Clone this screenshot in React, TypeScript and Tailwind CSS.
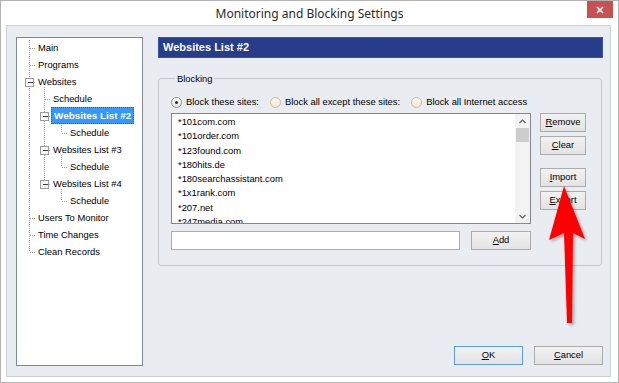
import React from 'react';

type TreeRow = { label: string; level: 0 | 1 | 2; box?: boolean; selected?: boolean };

const rows: TreeRow[] = [
  { label: 'Main', level: 0 },
  { label: 'Programs', level: 0 },
  { label: 'Websites', level: 0, box: true },
  { label: 'Schedule', level: 1 },
  { label: 'Websites List #2', level: 1, box: true, selected: true },
  { label: 'Schedule', level: 2 },
  { label: 'Websites List #3', level: 1, box: true },
  { label: 'Schedule', level: 2 },
  { label: 'Websites List #4', level: 1, box: true },
  { label: 'Schedule', level: 2 },
  { label: 'Users To Monitor', level: 0 },
  { label: 'Time Changes', level: 0 },
  { label: 'Clean Records', level: 0 },
];

const sites = [
  '*101com.com',
  '*101order.com',
  '*123found.com',
  '*180hits.de',
  '*180searchassistant.com',
  '*1x1rank.com',
  '*207.net',
  '*247media.com',
];

const indent = ['pl-[19px]', 'pl-[34px]', 'pl-[51px]'];
const lineX = [12, 27, 44];
const textX = [18, 33, 50];
const cy = (k: number) => 10 + 17 * k;

function TreeLines() {
  return (
    <svg className="absolute inset-0 pointer-events-none" width="125" height="326" shapeRendering="crispEdges">
      <g stroke="#a0a0a0" strokeDasharray="1 1">
        <line x1={12.5} y1={2} x2={12.5} y2={cy(12)} />
        <line x1={27.5} y1={cy(2) + 5} x2={27.5} y2={cy(8)} />
        {[4, 6, 8].map((k) => (
          <line key={k} x1={44.5} y1={cy(k) + 5} x2={44.5} y2={cy(k + 1)} />
        ))}
        {rows.map((r, k) => (
          <line
            key={k}
            x1={r.box ? lineX[r.level] + 5 : lineX[r.level] + 1}
            y1={cy(k) + 0.5}
            x2={textX[r.level]}
            y2={cy(k) + 0.5}
          />
        ))}
      </g>
      {rows.map((r, k) =>
        r.box ? (
          <g key={k}>
            <rect x={lineX[r.level] - 3.5} y={cy(k) - 3.5} width={8} height={8} fill="#f7f7f7" stroke="#9c9c9c" />
            <line x1={lineX[r.level] - 1} x2={lineX[r.level] + 4} y1={cy(k) + 0.5} y2={cy(k) + 0.5} stroke="#404040" />
          </g>
        ) : null
      )}
    </svg>
  );
}

function Radio({ checked, label, hot }: { checked?: boolean; label: string; hot?: boolean }) {
  return (
    <div className="flex items-center gap-[4px]">
      <span
        className={
          hot
            ? 'w-[11px] h-[11px] rounded-full border border-[#d8b593] bg-linear-to-b from-[#fffaf4] to-[#f6e6d6] flex items-center justify-center'
            : 'w-[11px] h-[11px] rounded-full border border-[#8e8f8f] bg-linear-to-b from-white to-[#e4e4e4] flex items-center justify-center'
        }
      >
        {checked && <span className="w-[3px] h-[3px] rounded-full bg-[#2a2a2a]" />}
      </span>
      <span>{label}</span>
    </div>
  );
}

function Btn({ children, className = '', focus }: { children: React.ReactNode; className?: string; focus?: boolean }) {
  return (
    <div
      className={`h-[19px] flex items-center justify-center border bg-linear-to-b from-[#f2f2f2] to-[#e3e3e3] text-black ${
        focus ? 'border-[#5a9ee6]' : 'border-[#acacac]'
      } ${className}`}
    >
      {children}
    </div>
  );
}

function Chevron({ up }: { up?: boolean }) {
  return (
    <svg width="7" height="5" viewBox="0 0 7 5">
      <polyline
        points={up ? '0.5,4 3.5,1 6.5,4' : '0.5,1 3.5,4 6.5,1'}
        fill="none"
        stroke="#606060"
        strokeWidth="1.2"
      />
    </svg>
  );
}

export default function App() {
  return (
    <div className="relative w-[619px] h-[383px] border border-[#b3b3b3] bg-white flex flex-col font-['Liberation_Sans',Arial,sans-serif] text-[9.4px] text-black overflow-hidden">
      {/* title bar */}
      <div className="relative h-[24px] shrink-0 flex items-center justify-center">
        <span className="font-['Noto_Sans',sans-serif] text-[12px] text-[#2b2b2b] pt-[2px]">
          Monitoring and Blocking Settings
        </span>
        <div className="absolute right-[5px] top-0 w-[26px] h-[17px] bg-[#c75050] flex items-center justify-center">
          <svg width="8" height="8" viewBox="0 0 8 8">
            <path d="M1 1L7 7M7 1L1 7" stroke="#fff" strokeWidth="1.6" />
          </svg>
        </div>
      </div>

      {/* client */}
      <div className="flex-1 ml-[5px] mr-[7px] mb-[5px] border border-[#cdd1d6] bg-[#e9ecf0] flex gap-[15px] pl-[9px] pr-[7px] pt-[11px] pb-[10px]">
        {/* tree */}
        <div className="relative w-[127px] shrink-0 border border-[#828790] bg-white">
          <TreeLines />
          <div className="relative pt-[1px]">
            {rows.map((r, k) => (
              <div key={k} className={`h-[17px] flex items-center ${indent[r.level]}`}>
                <span
                  className={
                    r.selected
                      ? 'h-[17px] leading-[17px] px-[3px] bg-[#3399ff] text-white font-bold text-[9.9px] outline-1 outline-dotted outline-[#6b5a3a] -outline-offset-1'
                      : 'px-[2px] leading-[17px] whitespace-nowrap'
                  }
                >
                  {r.label}
                </span>
              </div>
            ))}
          </div>
        </div>

        {/* page */}
        <div className="flex-1 flex flex-col">
          <div className="h-[21px] bg-[#253d8b] border border-[#3a55a5] flex items-center pl-[4px] text-white font-bold text-[11px]">
            Websites List #2
          </div>

          <fieldset className="mt-[15px] mr-[1px] border border-[#c3c8ce] rounded-[3px] pl-[12px] pt-[12px] pb-[15px]">
            <legend className="ml-[4px] px-[2px] leading-[11px]">Blocking</legend>
            <div className="flex items-center gap-[11px] h-[12px]">
              <Radio checked label="Block these sites:" />
              <Radio hot label="Block all except these sites:" />
              <Radio hot label="Block all Internet access" />
            </div>

            <div className="mt-[5px] flex gap-[9px]">
              <div className="w-[360px] flex flex-col">
                <div className="h-[111px] border border-[#828790] bg-white flex">
                  <div className="flex-1 pl-[6px] pt-[1px] overflow-hidden">
                    {sites.map((s) => (
                      <div key={s} className="leading-[14.3px] whitespace-nowrap">
                        {s}
                      </div>
                    ))}
                  </div>
                  <div className="w-[15px] bg-[#f3f3f3] flex flex-col items-stretch">
                    <div className="h-[14px] flex items-center justify-center">
                      <Chevron up />
                    </div>
                    <div className="h-[14px] mx-[1px] bg-[#cdcdcd]" />
                    <div className="flex-1" />
                    <div className="h-[14px] flex items-center justify-center">
                      <Chevron />
                    </div>
                  </div>
                </div>
                <div className="mt-[7px] flex gap-[11px]">
                  <div className="w-[289px] h-[19px] border border-[#abadb3] bg-white" />
                  <Btn className="w-[60px]">
                    <span className="underline">A</span>dd
                  </Btn>
                </div>
              </div>

              <div className="w-[46px] flex flex-col">
                <Btn>
                  <span className="underline">R</span>emove
                </Btn>
                <Btn className="mt-[4px]">
                  <span className="underline">C</span>lear
                </Btn>
                <Btn className="mt-[13px]">
                  <span className="underline">I</span>mport
                </Btn>
                <Btn className="mt-[4px]">
                  <span className="underline">E</span>xport
                </Btn>
              </div>
            </div>
          </fieldset>

          <div className="mt-auto mb-[1px] flex justify-end gap-[11px]">
            <Btn focus className="w-[69px]">
              <span className="underline">O</span>K
            </Btn>
            <Btn className="w-[69px]">
              <span className="underline">C</span>ancel
            </Btn>
          </div>
        </div>
      </div>

      {/* red arrow annotation */}
      <svg className="absolute left-0 top-0 pointer-events-none" width="619" height="383">
        <defs>
          <filter id="sh" x="-50%" y="-50%" width="200%" height="200%">
            <feGaussianBlur stdDeviation="1.5" />
          </filter>
        </defs>
        <path
          d="M565 187 L586 240 L574 234 L573 324 L568 324 L565 234 L550 241 Z"
          fill="#000"
          opacity="0.3"
          filter="url(#sh)"
        />
        <path d="M563 185 L584 238 L572 232 L571 322 L566 322 L563 232 L548 239 Z" fill="#ff0000" />
      </svg>
    </div>
  );
}
